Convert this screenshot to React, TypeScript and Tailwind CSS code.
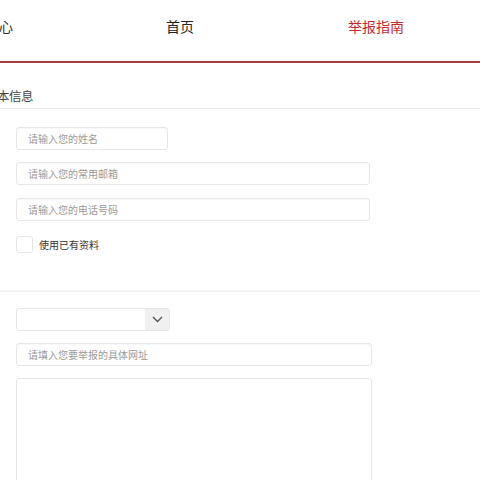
import React from "react";

const font = { fontFamily: '"Microsoft YaHei", "Noto Sans CJK SC", "Noto Sans", sans-serif' };

function Input({ w, placeholder }: { w: string; placeholder?: string }) {
  return (
    <div
      className={`${w} h-[23px] rounded-[3px] border border-[#e6e6e6] flex items-center pl-[11px] text-[10px] text-[#9a9a9a] shadow-[inset_0_1px_1px_rgba(0,0,0,0.03)]`}
    >
      {placeholder}
    </div>
  );
}

export default function App() {
  return (
    <div className="w-[480px] h-[480px] overflow-hidden bg-white" style={font}>
      {/* header */}
      <div className="h-[63px] border-b-2 border-[#a8383b] flex items-start pt-[19px]">
        <div className="w-[13px] text-[14px] leading-none text-[#333] -ml-[1px]">心</div>
        <div className="ml-[154px] text-[14px] leading-none text-[#222]">首页</div>
        <div className="ml-[154px] text-[14px] leading-none text-[#c4282e]">举报指南</div>
      </div>

      {/* section title */}
      <div className="h-[46px] border-b border-[#e8e8e8] flex items-end pb-[6px]">
        <div className="-ml-[15px] text-[12.5px] leading-none text-[#444] tracking-[-0.5px]">基本信息</div>
      </div>

      {/* form 1 */}
      <div className="pl-[16px] pt-[18px] flex flex-col">
        <Input w="w-[152px]" placeholder="请输入您的姓名" />
        <div className="h-[12px]" />
        <Input w="w-[354px]" placeholder="请输入您的常用邮箱" />
        <div className="h-[13px]" />
        <Input w="w-[354px]" placeholder="请输入您的电话号码" />
        <div className="h-[15px]" />
        <div className="flex items-center">
          <div className="w-[17px] h-[17px] rounded-[3px] border border-[#e6e6e6]" />
          <div className="ml-[6px] text-[10px] text-[#333]">使用已有资料</div>
        </div>
      </div>

      <div className="mt-[37px] h-[2px] bg-[#f2f2f2]" />

      {/* form 2 */}
      <div className="pl-[16px] pt-[16px] flex flex-col">
        <div className="w-[154px] h-[23px] rounded-[3px] border border-[#e6e6e6] flex justify-end">
          <div className="w-[24px] h-full bg-[#f0f0f0] flex items-center justify-center">
            <svg width="11" height="7" viewBox="0 0 11 7" fill="none">
              <path d="M1 1l4.5 4.5L10 1" stroke="#555" strokeWidth="1.4" />
            </svg>
          </div>
        </div>
        <div className="h-[12px]" />
        <Input w="w-[356px]" placeholder="请填入您要举报的具体网址" />
        <div className="h-[12px]" />
        <div className="w-[356px] h-[140px] rounded-[3px] border border-[#e6e6e6]" />
      </div>
    </div>
  );
}
